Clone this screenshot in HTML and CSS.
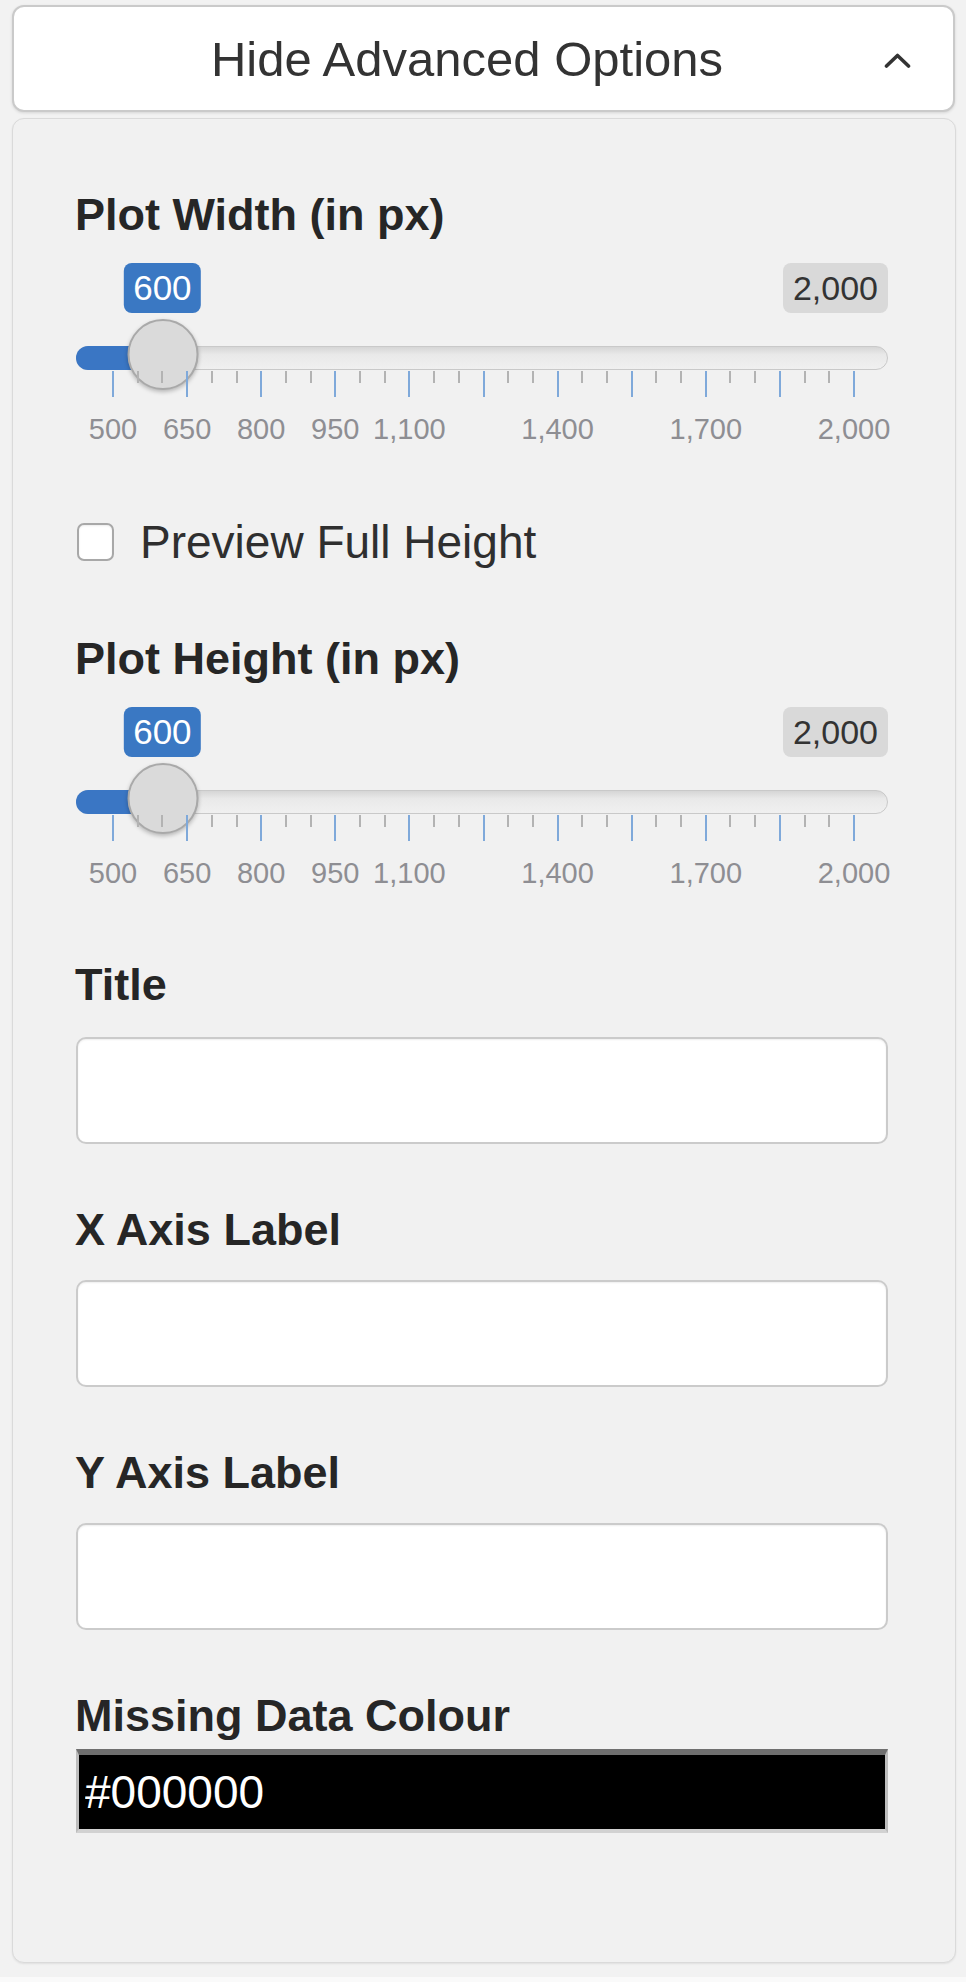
FILE: index.html
```html
<!DOCTYPE html>
<html lang="en">
<head>
<meta charset="utf-8">
<title>Advanced Options</title>
<link rel="stylesheet" href="styles.css">
</head>
<body>
<div class="page">
  <button class="toggle" type="button">
    <span class="toggle-text">Hide Advanced Options</span>
    <svg class="caret" width="27" height="15" viewBox="0 0 27 15" aria-hidden="true"><polyline points="2.5,13 13.5,2.5 24.5,13" fill="none" stroke="#333" stroke-width="3.6" stroke-linecap="round" stroke-linejoin="round"/></svg>
  </button>

  <div class="panel">
    <div class="label">Plot Width (in px)</div>
    <div class="slider" style="--p: 0.06667">
      <div class="slider-badges">
        <span class="badge badge-value">600</span>
        <span class="badge badge-max">2,000</span>
      </div>
      <div class="slider-line">
        <div class="bar"></div>
        <div class="handle"></div>
      </div>
      <div class="slider-grid">
        <div class="grid-inner">
          <i class="tick major" style="left:0%"></i><i class="tick" style="left:3.333%"></i><i class="tick" style="left:6.667%"></i>
          <i class="tick major" style="left:10%"></i><i class="tick" style="left:13.333%"></i><i class="tick" style="left:16.667%"></i>
          <i class="tick major" style="left:20%"></i><i class="tick" style="left:23.333%"></i><i class="tick" style="left:26.667%"></i>
          <i class="tick major" style="left:30%"></i><i class="tick" style="left:33.333%"></i><i class="tick" style="left:36.667%"></i>
          <i class="tick major" style="left:40%"></i><i class="tick" style="left:43.333%"></i><i class="tick" style="left:46.667%"></i>
          <i class="tick major" style="left:50%"></i><i class="tick" style="left:53.333%"></i><i class="tick" style="left:56.667%"></i>
          <i class="tick major" style="left:60%"></i><i class="tick" style="left:63.333%"></i><i class="tick" style="left:66.667%"></i>
          <i class="tick major" style="left:70%"></i><i class="tick" style="left:73.333%"></i><i class="tick" style="left:76.667%"></i>
          <i class="tick major" style="left:80%"></i><i class="tick" style="left:83.333%"></i><i class="tick" style="left:86.667%"></i>
          <i class="tick major" style="left:90%"></i><i class="tick" style="left:93.333%"></i><i class="tick" style="left:96.667%"></i>
          <i class="tick major" style="left:100%"></i>
        </div>
      </div>
      <div class="slider-labels">
        <div class="grid-inner">
          <span class="num" style="left:0%">500</span>
          <span class="num" style="left:10%">650</span>
          <span class="num" style="left:20%">800</span>
          <span class="num" style="left:30%">950</span>
          <span class="num" style="left:40%">1,100</span>
          <span class="num" style="left:60%">1,400</span>
          <span class="num" style="left:80%">1,700</span>
          <span class="num" style="left:100%">2,000</span>
        </div>
      </div>
    </div>

    <label class="check-row">
      <input type="checkbox" class="check">
      <span class="check-text">Preview Full Height</span>
    </label>

    <div class="label label-second">Plot Height (in px)</div>
    <div class="slider" style="--p: 0.06667">
      <div class="slider-badges">
        <span class="badge badge-value">600</span>
        <span class="badge badge-max">2,000</span>
      </div>
      <div class="slider-line">
        <div class="bar"></div>
        <div class="handle"></div>
      </div>
      <div class="slider-grid">
        <div class="grid-inner">
          <i class="tick major" style="left:0%"></i><i class="tick" style="left:3.333%"></i><i class="tick" style="left:6.667%"></i>
          <i class="tick major" style="left:10%"></i><i class="tick" style="left:13.333%"></i><i class="tick" style="left:16.667%"></i>
          <i class="tick major" style="left:20%"></i><i class="tick" style="left:23.333%"></i><i class="tick" style="left:26.667%"></i>
          <i class="tick major" style="left:30%"></i><i class="tick" style="left:33.333%"></i><i class="tick" style="left:36.667%"></i>
          <i class="tick major" style="left:40%"></i><i class="tick" style="left:43.333%"></i><i class="tick" style="left:46.667%"></i>
          <i class="tick major" style="left:50%"></i><i class="tick" style="left:53.333%"></i><i class="tick" style="left:56.667%"></i>
          <i class="tick major" style="left:60%"></i><i class="tick" style="left:63.333%"></i><i class="tick" style="left:66.667%"></i>
          <i class="tick major" style="left:70%"></i><i class="tick" style="left:73.333%"></i><i class="tick" style="left:76.667%"></i>
          <i class="tick major" style="left:80%"></i><i class="tick" style="left:83.333%"></i><i class="tick" style="left:86.667%"></i>
          <i class="tick major" style="left:90%"></i><i class="tick" style="left:93.333%"></i><i class="tick" style="left:96.667%"></i>
          <i class="tick major" style="left:100%"></i>
        </div>
      </div>
      <div class="slider-labels">
        <div class="grid-inner">
          <span class="num" style="left:0%">500</span>
          <span class="num" style="left:10%">650</span>
          <span class="num" style="left:20%">800</span>
          <span class="num" style="left:30%">950</span>
          <span class="num" style="left:40%">1,100</span>
          <span class="num" style="left:60%">1,400</span>
          <span class="num" style="left:80%">1,700</span>
          <span class="num" style="left:100%">2,000</span>
        </div>
      </div>
    </div>

    <div class="label label-title">Title</div>
    <input type="text" class="text-input">

    <div class="label label-field">X Axis Label</div>
    <input type="text" class="text-input">

    <div class="label label-field">Y Axis Label</div>
    <input type="text" class="text-input">

    <div class="label label-field">Missing Data Colour</div>
    <input type="text" class="color-input" value="#000000">
  </div>
</div>
</body>
</html>
```

FILE: styles.css
```css
html {
  background: #fafafa;
}

body {
  margin: 0;
  font-family: "Liberation Sans", Arial, Helvetica, sans-serif;
  color: #2d2d2d;
}

.page {
  background: #f2f2f2;
  padding: 5px 0 14px 12px;
}

.toggle {
  box-sizing: border-box;
  width: 943px;
  height: 107px;
  display: flex;
  align-items: center;
  padding: 0 42px 0 36px;
  margin: 0;
  background: #fff;
  border: 2px solid #cacaca;
  border-radius: 12px;
  box-shadow: 0 1px 3px rgba(0, 0, 0, 0.12);
  font-family: "Liberation Sans", Arial, Helvetica, sans-serif;
  font-size: 49px;
  color: #333;
  cursor: pointer;
}

.toggle-text {
  flex: 1;
  text-align: center;
}

.caret {
  display: block;
  flex: none;
  margin-top: 4px;
}

.panel {
  box-sizing: border-box;
  width: 944px;
  margin-top: 6px;
  padding: 70px 67px 129px 63px;
  background: #f1f1f1;
  border: 1px solid #dadada;
  border-radius: 12px;
  box-shadow: 0 1px 2px rgba(0, 0, 0, 0.08);
  display: flex;
  flex-direction: column;
}

.label {
  font-size: 45px;
  line-height: 52px;
  font-weight: bold;
  color: #262626;
  margin-left: -1px;
}

.label-second {
  margin-top: 65px;
}

.label-title {
  margin-top: 71px;
}

.label-field {
  margin-top: 60px;
}

/* slider */
.slider {
  display: flex;
  flex-direction: column;
}

.slider-badges {
  position: relative;
  display: flex;
  justify-content: flex-end;
  height: 50px;
  margin-top: 22px;
}

.badge {
  box-sizing: border-box;
  height: 50px;
  line-height: 50px;
  font-size: 35px;
  border-radius: 8px;
  padding: 0 9px;
}

.badge-value {
  position: absolute;
  top: 0;
  left: calc(37px + (100% - 71px) * var(--p));
  transform: translateX(-50%);
  background: #3a78c3;
  color: #fff;
}

.badge-max {
  background: #d9d9d9;
  color: #333;
  padding: 0 10px;
  font-size: 34px;
}

.slider-line {
  position: relative;
  height: 24px;
  margin-top: 33px;
  box-sizing: border-box;
  border: 1px solid #c9c9c9;
  border-radius: 12px;
  background: linear-gradient(#d6d6d6, #e9e9e9 35%, #f0f0f0);
}

.bar {
  position: absolute;
  left: -1px;
  top: -1px;
  bottom: -1px;
  width: calc(37px + (100% - 71px) * var(--p));
  background: #3a76c4;
  border-radius: 12px 0 0 12px;
}

.handle {
  position: absolute;
  top: -28px;
  left: calc(37px + (100% - 71px) * var(--p));
  transform: translateX(-50%);
  box-sizing: border-box;
  width: 71px;
  height: 71px;
  border-radius: 50%;
  background: #dadada;
  border: 2px solid #a9a9a9;
  box-shadow: 0 2px 4px rgba(0, 0, 0, 0.25);
}

.slider-grid {
  height: 26px;
  margin-top: 1px;
}

.grid-inner {
  position: relative;
  height: 100%;
  margin: 0 34px 0 37px;
}

.tick {
  position: absolute;
  top: 0;
  width: 2px;
  height: 12px;
  margin-left: -1px;
  background: #b3b3b3;
}

.tick.major {
  height: 26px;
  background: #7fa9da;
}

.slider-labels {
  height: 29px;
  margin-top: 18px;
}

.num {
  position: absolute;
  top: 0;
  transform: translateX(-50%);
  font-size: 29px;
  line-height: 29px;
  color: #8e8e93;
  white-space: nowrap;
}

/* checkbox */
.check-row {
  display: flex;
  align-items: center;
  height: 52px;
  margin-top: 72px;
}

.check {
  appearance: none;
  -webkit-appearance: none;
  box-sizing: border-box;
  width: 37px;
  height: 38px;
  margin: 0 0 0 1px;
  border: 2px solid #a8a8a8;
  border-radius: 7px;
  background: #fff;
  box-shadow: inset 0 1px 2px rgba(0, 0, 0, 0.08);
}

.check-text {
  margin-left: 26px;
  font-size: 46px;
  color: #2f2f2f;
}

/* inputs */
.text-input {
  box-sizing: border-box;
  display: block;
  width: 100%;
  height: 107px;
  margin: 26px 0 0;
  padding: 0 20px;
  border: 2px solid #cbcbcb;
  border-radius: 10px;
  background: #fff;
  box-shadow: inset 0 1px 2px rgba(0, 0, 0, 0.07);
  font-family: "Liberation Sans", Arial, Helvetica, sans-serif;
  font-size: 40px;
}

.label-field + .text-input {
  margin-top: 24px;
}

.color-input {
  box-sizing: border-box;
  display: block;
  width: 100%;
  height: 84px;
  margin: 7px 0 0;
  padding: 0 0 0 6px;
  border-style: solid;
  border-width: 6px 3px 4px 3px;
  border-color: #6f6f6f #bdbdbd #d2d2d2 #bdbdbd;
  background: #000;
  color: #fff;
  font-family: "Liberation Sans", Arial, Helvetica, sans-serif;
  font-size: 46px;
}
```
